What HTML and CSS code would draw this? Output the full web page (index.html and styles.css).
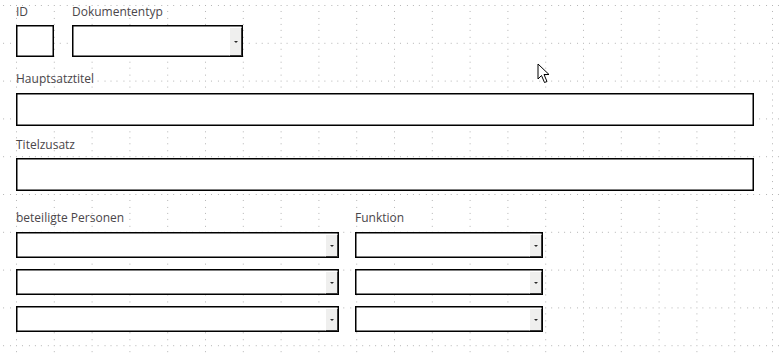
FILE: index.html
```html
<!DOCTYPE html>
<html lang="de">
<head>
<meta charset="utf-8">
<title>Formular</title>
<link rel="stylesheet" href="styles.css">
</head>
<body>
<div class="canvas">
  <svg class="grid" width="779" height="357" aria-hidden="true">
    <defs>
      <pattern id="g" x="16" y="5" width="37.8" height="37.8" patternUnits="userSpaceOnUse">
        <rect x="0" y="0" width="1" height="1"/>
        <rect x="6.3" y="0" width="1" height="1"/>
        <rect x="12.6" y="0" width="1" height="1"/>
        <rect x="18.9" y="0" width="1" height="1"/>
        <rect x="25.2" y="0" width="1" height="1"/>
        <rect x="31.5" y="0" width="1" height="1"/>
        <rect x="0" y="6.3" width="1" height="1"/>
        <rect x="0" y="12.6" width="1" height="1"/>
        <rect x="0" y="18.9" width="1" height="1"/>
        <rect x="0" y="25.2" width="1" height="1"/>
        <rect x="0" y="31.5" width="1" height="1"/>
      </pattern>
    </defs>
    <rect width="779" height="357" fill="url(#g)"/>
  </svg>

  <form class="form">
    <div class="row row-top">
      <div class="field">
        <div class="label">ID</div>
        <div class="box box-id"></div>
      </div>
      <div class="field">
        <div class="label">Dokumententyp</div>
        <div class="box select select-typ"><span class="btn"><span class="arrow"></span></span></div>
      </div>
    </div>

    <div class="label label-haupt">Hauptsatztitel</div>
    <div class="box box-wide box-haupt"></div>

    <div class="label label-zusatz">Titelzusatz</div>
    <div class="box box-wide box-zusatz"></div>

    <div class="people">
      <div class="col col-person">
        <div class="label">beteiligte Personen</div>
        <div class="box select sel-row"><span class="btn"><span class="arrow"></span></span></div>
        <div class="box select sel-row"><span class="btn"><span class="arrow"></span></span></div>
        <div class="box select sel-row"><span class="btn"><span class="arrow"></span></span></div>
      </div>
      <div class="col col-func">
        <div class="label">Funktion</div>
        <div class="box select sel-row"><span class="btn"><span class="arrow"></span></span></div>
        <div class="box select sel-row"><span class="btn"><span class="arrow"></span></span></div>
        <div class="box select sel-row"><span class="btn"><span class="arrow"></span></span></div>
      </div>
    </div>
  </form>

  <svg class="cursor" width="14" height="21" viewBox="0 0 14 21" aria-hidden="true">
    <path d="M1 1 L1 16 L4.5 12.5 L7.5 19.5 L10 18.5 L7 11.5 L12 11.5 Z" fill="#fff" stroke="#000" stroke-width="1" stroke-linejoin="miter"/>
  </svg>
</div>
</body>
</html>
```

FILE: styles.css
```css
html, body {
  margin: 0;
  padding: 0;
  background: #fff;
}

.canvas {
  position: relative;
  width: 779px;
  height: 357px;
  overflow: hidden;
  font-family: "Open Sans", "DejaVu Sans", sans-serif;
  font-size: 12px;
  color: #4a464a;
}

.grid {
  position: absolute;
  left: 0;
  top: 0;
  fill: #b4b4b4;
  shape-rendering: crispEdges;
}

.form {
  position: relative;
  margin: 0;
  padding: 4px 0 0 16px;
}

.label {
  line-height: 16px;
  height: 16px;
  white-space: nowrap;
}

.box {
  box-sizing: border-box;
  background: #fff;
  border: 1px solid #000;
  box-shadow: inset 0 0 0 0.5px #000;
}

.row-top {
  display: flex;
  gap: 18px;
}

.row-top .box {
  margin-top: 5px;
  height: 32px;
}

.box-id {
  width: 38px;
}

.select-typ {
  width: 171px;
}

.label-haupt {
  margin-top: 14px;
}

.box-wide {
  width: 738px;
  height: 33px;
  margin-top: 6px;
}

.label-zusatz {
  margin-top: 11px;
}

.box-zusatz {
  margin-top: 5px;
}

.people {
  display: flex;
  gap: 16px;
  margin-top: 19px;
}

.col {
  display: flex;
  flex-direction: column;
}

.col-person {
  width: 323px;
}

.col-func {
  width: 188px;
}

.sel-row {
  height: 26px;
  margin-top: 11px;
}

.col .label + .sel-row {
  margin-top: 6px;
}

.select {
  display: flex;
  justify-content: flex-end;
  padding: 1px 0 0 0;
}

.btn {
  box-sizing: border-box;
  width: 13px;
  height: 100%;
  background: #efefee;
  border-left: 1px solid #fff;
  border-top: 1px solid #fff;
  border-right: 1px solid #3a3a3a;
  border-bottom: 1px solid #3a3a3a;
  display: flex;
  align-items: center;
  justify-content: center;
}

.arrow {
  width: 0;
  height: 0;
  border-left: 2px solid transparent;
  border-right: 2px solid transparent;
  border-top: 2px solid #2a2a2a;
}

.cursor {
  position: absolute;
  left: 537px;
  top: 63px;
}
```
